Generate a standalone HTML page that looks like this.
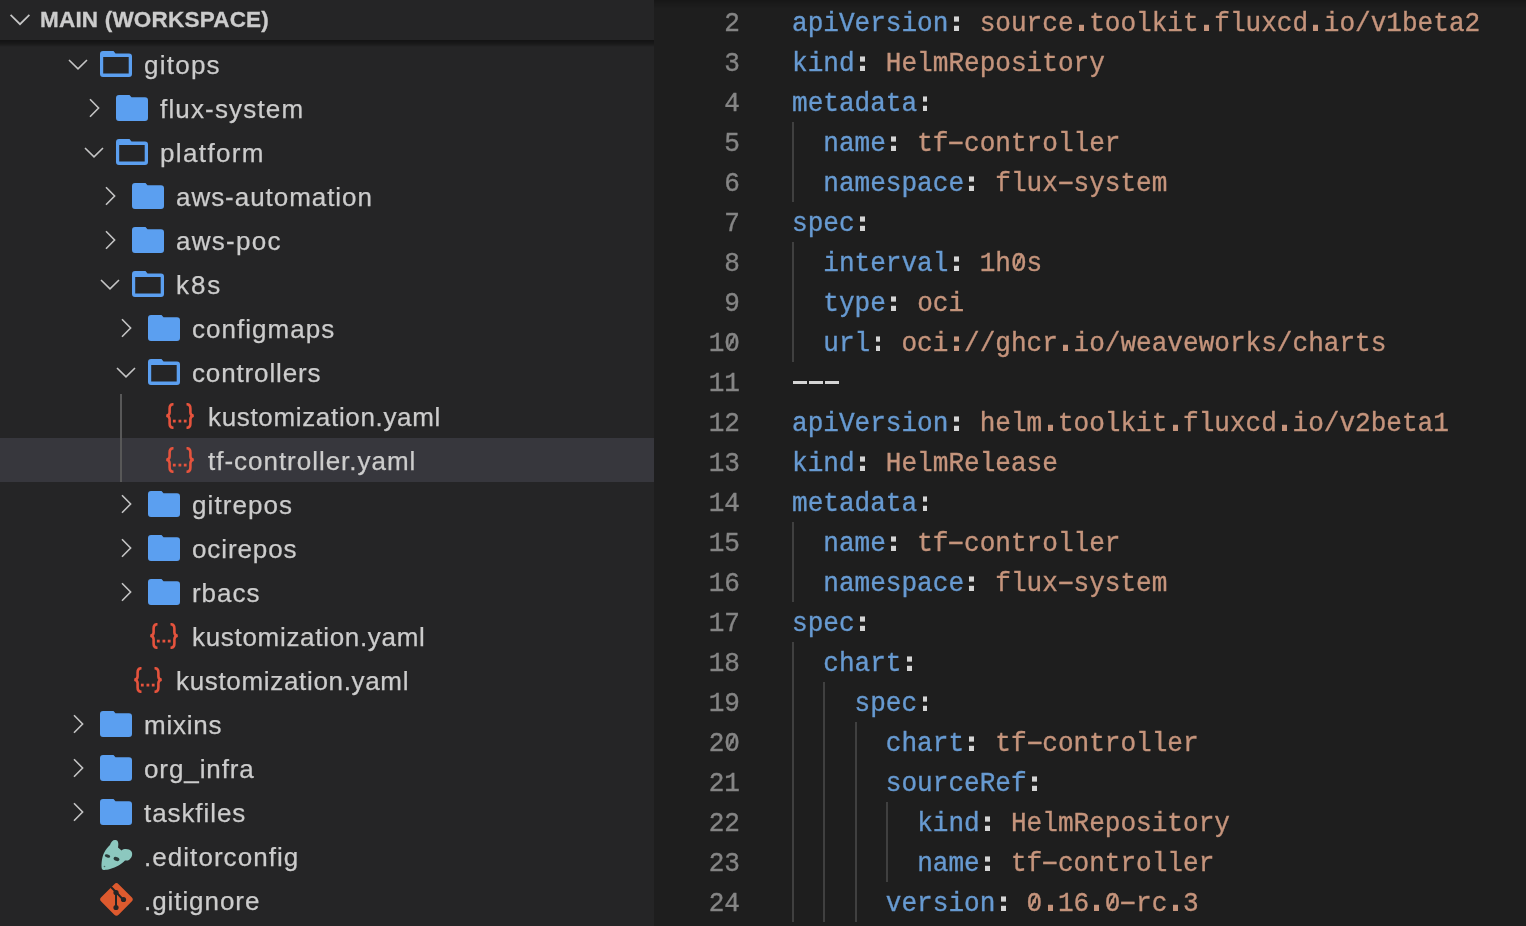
<!DOCTYPE html>
<html><head><meta charset="utf-8">
<style>
html,body{margin:0;padding:0;}
body{-webkit-font-smoothing:antialiased;width:1526px;height:926px;overflow:hidden;background:#1e1e1e;position:relative;font-family:"Liberation Sans",sans-serif;}
#sb{position:absolute;left:0;top:0;width:654px;height:926px;background:#252526;overflow:hidden;}
#hdr{position:absolute;left:0;top:0;width:654px;height:42px;background:#252526;z-index:3;}
#hdr .t{position:absolute;left:39.5px;top:6.5px;font-weight:bold;font-size:22.5px;color:#cccccc;letter-spacing:0.2px;line-height:26px;white-space:nowrap;will-change:transform;-webkit-text-stroke:0.3px #cccccc;}
#shadow{position:absolute;left:0;top:40px;width:654px;height:7px;background:linear-gradient(rgba(0,0,0,0.48),rgba(0,0,0,0.3) 55%,rgba(0,0,0,0.1) 85%,rgba(0,0,0,0));z-index:4;}
.row{position:absolute;left:0;width:654px;height:44px;}
.row.sel{background:#37373d;}
.ic{position:absolute;display:block;}
.lbl{position:absolute;top:1px;line-height:44px;font-size:26px;color:#cccccc;white-space:nowrap;letter-spacing:0px;will-change:transform;-webkit-text-stroke:0.25px #cccccc;}
#tg{position:absolute;left:120px;top:394px;width:2px;height:88px;background:#585858;}
#ed{position:absolute;left:654px;top:0;width:872px;height:926px;background:#1e1e1e;overflow:hidden;}
#edshadow{position:absolute;left:654px;top:0;width:872px;height:8px;background:linear-gradient(rgba(0,0,0,0.22),rgba(0,0,0,0));z-index:5;}
#sbedge{position:absolute;left:654px;top:0;width:0px;height:926px;display:none;z-index:5;}
.ln{position:absolute;left:654px;width:86px;text-align:right;height:40px;line-height:40px;font-family:"Liberation Mono",monospace;font-size:26.07px;color:#858585;will-change:transform;transform-origin:0 27px;transform:translateY(2px) scaleY(1.04);-webkit-text-stroke:0.35px currentColor;}
.cl{position:absolute;left:791.5px;height:40px;line-height:40px;font-family:"Liberation Mono",monospace;font-size:26.07px;white-space:pre;will-change:transform;transform-origin:0 27px;transform:translateY(2px) scaleY(1.04);-webkit-text-stroke:0.35px currentColor;}
.ig{position:absolute;width:2px;background:#404040;}
.hy{display:inline-block;transform:translateY(-1px) scaleX(1.8);}
.cn{display:inline-block;position:relative;color:transparent !important;-webkit-text-stroke:0 !important;}
.cn::before,.cn::after{content:"";position:absolute;left:5.4px;width:4.8px;height:5.2px;background:#d4d4d4;}
.cn.cv::before,.cn.cv::after{background:#c5947c;}
.cn::before{top:12.9px;}
.cn::after{top:21.9px;}
.pd{display:inline-block;position:relative;color:transparent !important;-webkit-text-stroke:0 !important;}
.pd::before{content:"";position:absolute;left:5.3px;width:5px;top:21.4px;height:5.6px;background:#c5947c;}
.z{position:relative;display:inline-block;}
.z::after{content:"";position:absolute;left:50%;top:50%;width:2.4px;height:13px;margin-left:-1.2px;margin-top:-9px;background:currentColor;transform:rotate(28deg);}
</style></head><body>
<div id="sb">
<div id="hdr"><svg class="ic" style="left:8px;top:8px" width="24" height="24" viewBox="0 0 24 24"><path d="M2.6 6.8 L12 16.2 L21.4 6.8" fill="none" stroke="#c5c5c5" stroke-width="1.7"/></svg><span class="t">MAIN (WORKSPACE)</span></div>
<div id="shadow"></div>
<div class="row" style="top:42px"><svg class="ic" style="left:66px;top:10.0px" width="24" height="24" viewBox="0 0 24 24"><path d="M3 8 L12 16.8 L21 8" fill="none" stroke="#c5c5c5" stroke-width="1.6"/></svg><svg class="ic" style="left:100px;top:9px" width="32" height="26" viewBox="0 0 32 26"><path d="M3 0 H13.5 L15.5 2.6 H29 A3 3 0 0 1 32 5.6 V23 A3 3 0 0 1 29 26 H3 A3 3 0 0 1 0 23 V3 A3 3 0 0 1 3 0 Z M3.2 6.1 V22.5 H28.7 V6.1 Z" fill="#5b9ff0" fill-rule="evenodd"/></svg><span class="lbl" style="left:144px;letter-spacing:1.24px">gitops</span></div><div class="row" style="top:86px"><svg class="ic" style="left:82px;top:10.0px" width="24" height="24" viewBox="0 0 24 24"><path d="M8 3.2 L16.6 12 L8 20.8" fill="none" stroke="#c5c5c5" stroke-width="1.6"/></svg><svg class="ic" style="left:116px;top:9px" width="32" height="26" viewBox="0 0 32 26"><path d="M3 0 H13.5 L15.5 2.3 H29 A3 3 0 0 1 32 5.3 V23 A3 3 0 0 1 29 26 H3 A3 3 0 0 1 0 23 V3 A3 3 0 0 1 3 0 Z" fill="#5b9ff0"/></svg><span class="lbl" style="left:160px;letter-spacing:1.16px">flux-system</span></div><div class="row" style="top:130px"><svg class="ic" style="left:82px;top:10.0px" width="24" height="24" viewBox="0 0 24 24"><path d="M3 8 L12 16.8 L21 8" fill="none" stroke="#c5c5c5" stroke-width="1.6"/></svg><svg class="ic" style="left:116px;top:9px" width="32" height="26" viewBox="0 0 32 26"><path d="M3 0 H13.5 L15.5 2.6 H29 A3 3 0 0 1 32 5.6 V23 A3 3 0 0 1 29 26 H3 A3 3 0 0 1 0 23 V3 A3 3 0 0 1 3 0 Z M3.2 6.1 V22.5 H28.7 V6.1 Z" fill="#5b9ff0" fill-rule="evenodd"/></svg><span class="lbl" style="left:160px;letter-spacing:1.373px">platform</span></div><div class="row" style="top:174px"><svg class="ic" style="left:98px;top:10.0px" width="24" height="24" viewBox="0 0 24 24"><path d="M8 3.2 L16.6 12 L8 20.8" fill="none" stroke="#c5c5c5" stroke-width="1.6"/></svg><svg class="ic" style="left:132px;top:9px" width="32" height="26" viewBox="0 0 32 26"><path d="M3 0 H13.5 L15.5 2.3 H29 A3 3 0 0 1 32 5.3 V23 A3 3 0 0 1 29 26 H3 A3 3 0 0 1 0 23 V3 A3 3 0 0 1 3 0 Z" fill="#5b9ff0"/></svg><span class="lbl" style="left:176px;letter-spacing:0.956px">aws-automation</span></div><div class="row" style="top:218px"><svg class="ic" style="left:98px;top:10.0px" width="24" height="24" viewBox="0 0 24 24"><path d="M8 3.2 L16.6 12 L8 20.8" fill="none" stroke="#c5c5c5" stroke-width="1.6"/></svg><svg class="ic" style="left:132px;top:9px" width="32" height="26" viewBox="0 0 32 26"><path d="M3 0 H13.5 L15.5 2.3 H29 A3 3 0 0 1 32 5.3 V23 A3 3 0 0 1 29 26 H3 A3 3 0 0 1 0 23 V3 A3 3 0 0 1 3 0 Z" fill="#5b9ff0"/></svg><span class="lbl" style="left:176px;letter-spacing:1.267px">aws-poc</span></div><div class="row" style="top:262px"><svg class="ic" style="left:98px;top:10.0px" width="24" height="24" viewBox="0 0 24 24"><path d="M3 8 L12 16.8 L21 8" fill="none" stroke="#c5c5c5" stroke-width="1.6"/></svg><svg class="ic" style="left:132px;top:9px" width="32" height="26" viewBox="0 0 32 26"><path d="M3 0 H13.5 L15.5 2.6 H29 A3 3 0 0 1 32 5.6 V23 A3 3 0 0 1 29 26 H3 A3 3 0 0 1 0 23 V3 A3 3 0 0 1 3 0 Z M3.2 6.1 V22.5 H28.7 V6.1 Z" fill="#5b9ff0" fill-rule="evenodd"/></svg><span class="lbl" style="left:176px;letter-spacing:1.9px">k8s</span></div><div class="row" style="top:306px"><svg class="ic" style="left:114px;top:10.0px" width="24" height="24" viewBox="0 0 24 24"><path d="M8 3.2 L16.6 12 L8 20.8" fill="none" stroke="#c5c5c5" stroke-width="1.6"/></svg><svg class="ic" style="left:148px;top:9px" width="32" height="26" viewBox="0 0 32 26"><path d="M3 0 H13.5 L15.5 2.3 H29 A3 3 0 0 1 32 5.3 V23 A3 3 0 0 1 29 26 H3 A3 3 0 0 1 0 23 V3 A3 3 0 0 1 3 0 Z" fill="#5b9ff0"/></svg><span class="lbl" style="left:192px;letter-spacing:1.021px">configmaps</span></div><div class="row" style="top:350px"><svg class="ic" style="left:114px;top:10.0px" width="24" height="24" viewBox="0 0 24 24"><path d="M3 8 L12 16.8 L21 8" fill="none" stroke="#c5c5c5" stroke-width="1.6"/></svg><svg class="ic" style="left:148px;top:9px" width="32" height="26" viewBox="0 0 32 26"><path d="M3 0 H13.5 L15.5 2.6 H29 A3 3 0 0 1 32 5.6 V23 A3 3 0 0 1 29 26 H3 A3 3 0 0 1 0 23 V3 A3 3 0 0 1 3 0 Z M3.2 6.1 V22.5 H28.7 V6.1 Z" fill="#5b9ff0" fill-rule="evenodd"/></svg><span class="lbl" style="left:192px;letter-spacing:0.86px">controllers</span></div><div class="row" style="top:394px"><svg class="ic" style="left:165px;top:9px" width="30" height="26" viewBox="0 0 30 26"><path d="M8.5 1.2 C5.5 1.2 4.6 2.6 4.6 5.5 V9.5 C4.6 11.5 3.6 12.5 1.4 12.8 C3.6 13.2 4.6 14.2 4.6 16.2 V20.5 C4.6 23.4 5.5 24.8 8.5 24.8" fill="none" stroke="#e5533d" stroke-width="2.6"/><path d="M21.5 1.2 C24.5 1.2 25.4 2.6 25.4 5.5 V9.5 C25.4 11.5 26.4 12.5 28.6 12.8 C26.4 13.2 25.4 14.2 25.4 16.2 V20.5 C25.4 23.4 24.5 24.8 21.5 24.8" fill="none" stroke="#e5533d" stroke-width="2.6"/><rect x="7.9" y="16.7" width="2.8" height="2.8" fill="#e5533d"/><rect x="13.5" y="16.7" width="2.8" height="2.8" fill="#e5533d"/><rect x="18.8" y="16.7" width="2.8" height="2.8" fill="#e5533d"/></svg><span class="lbl" style="left:208px;letter-spacing:0.662px">kustomization.yaml</span></div><div class="row sel" style="top:438px"><svg class="ic" style="left:165px;top:9px" width="30" height="26" viewBox="0 0 30 26"><path d="M8.5 1.2 C5.5 1.2 4.6 2.6 4.6 5.5 V9.5 C4.6 11.5 3.6 12.5 1.4 12.8 C3.6 13.2 4.6 14.2 4.6 16.2 V20.5 C4.6 23.4 5.5 24.8 8.5 24.8" fill="none" stroke="#e5533d" stroke-width="2.6"/><path d="M21.5 1.2 C24.5 1.2 25.4 2.6 25.4 5.5 V9.5 C25.4 11.5 26.4 12.5 28.6 12.8 C26.4 13.2 25.4 14.2 25.4 16.2 V20.5 C25.4 23.4 24.5 24.8 21.5 24.8" fill="none" stroke="#e5533d" stroke-width="2.6"/><rect x="7.9" y="16.7" width="2.8" height="2.8" fill="#e5533d"/><rect x="13.5" y="16.7" width="2.8" height="2.8" fill="#e5533d"/><rect x="18.8" y="16.7" width="2.8" height="2.8" fill="#e5533d"/></svg><span class="lbl" style="left:208px;letter-spacing:0.975px">tf-controller.yaml</span></div><div class="row" style="top:482px"><svg class="ic" style="left:114px;top:10.0px" width="24" height="24" viewBox="0 0 24 24"><path d="M8 3.2 L16.6 12 L8 20.8" fill="none" stroke="#c5c5c5" stroke-width="1.6"/></svg><svg class="ic" style="left:148px;top:9px" width="32" height="26" viewBox="0 0 32 26"><path d="M3 0 H13.5 L15.5 2.3 H29 A3 3 0 0 1 32 5.3 V23 A3 3 0 0 1 29 26 H3 A3 3 0 0 1 0 23 V3 A3 3 0 0 1 3 0 Z" fill="#5b9ff0"/></svg><span class="lbl" style="left:192px;letter-spacing:1.083px">gitrepos</span></div><div class="row" style="top:526px"><svg class="ic" style="left:114px;top:10.0px" width="24" height="24" viewBox="0 0 24 24"><path d="M8 3.2 L16.6 12 L8 20.8" fill="none" stroke="#c5c5c5" stroke-width="1.6"/></svg><svg class="ic" style="left:148px;top:9px" width="32" height="26" viewBox="0 0 32 26"><path d="M3 0 H13.5 L15.5 2.3 H29 A3 3 0 0 1 32 5.3 V23 A3 3 0 0 1 29 26 H3 A3 3 0 0 1 0 23 V3 A3 3 0 0 1 3 0 Z" fill="#5b9ff0"/></svg><span class="lbl" style="left:192px;letter-spacing:0.886px">ocirepos</span></div><div class="row" style="top:570px"><svg class="ic" style="left:114px;top:10.0px" width="24" height="24" viewBox="0 0 24 24"><path d="M8 3.2 L16.6 12 L8 20.8" fill="none" stroke="#c5c5c5" stroke-width="1.6"/></svg><svg class="ic" style="left:148px;top:9px" width="32" height="26" viewBox="0 0 32 26"><path d="M3 0 H13.5 L15.5 2.3 H29 A3 3 0 0 1 32 5.3 V23 A3 3 0 0 1 29 26 H3 A3 3 0 0 1 0 23 V3 A3 3 0 0 1 3 0 Z" fill="#5b9ff0"/></svg><span class="lbl" style="left:192px;letter-spacing:0.95px">rbacs</span></div><div class="row" style="top:614px"><svg class="ic" style="left:149px;top:9px" width="30" height="26" viewBox="0 0 30 26"><path d="M8.5 1.2 C5.5 1.2 4.6 2.6 4.6 5.5 V9.5 C4.6 11.5 3.6 12.5 1.4 12.8 C3.6 13.2 4.6 14.2 4.6 16.2 V20.5 C4.6 23.4 5.5 24.8 8.5 24.8" fill="none" stroke="#e5533d" stroke-width="2.6"/><path d="M21.5 1.2 C24.5 1.2 25.4 2.6 25.4 5.5 V9.5 C25.4 11.5 26.4 12.5 28.6 12.8 C26.4 13.2 25.4 14.2 25.4 16.2 V20.5 C25.4 23.4 24.5 24.8 21.5 24.8" fill="none" stroke="#e5533d" stroke-width="2.6"/><rect x="7.9" y="16.7" width="2.8" height="2.8" fill="#e5533d"/><rect x="13.5" y="16.7" width="2.8" height="2.8" fill="#e5533d"/><rect x="18.8" y="16.7" width="2.8" height="2.8" fill="#e5533d"/></svg><span class="lbl" style="left:192px;letter-spacing:0.69px">kustomization.yaml</span></div><div class="row" style="top:658px"><svg class="ic" style="left:133px;top:9px" width="30" height="26" viewBox="0 0 30 26"><path d="M8.5 1.2 C5.5 1.2 4.6 2.6 4.6 5.5 V9.5 C4.6 11.5 3.6 12.5 1.4 12.8 C3.6 13.2 4.6 14.2 4.6 16.2 V20.5 C4.6 23.4 5.5 24.8 8.5 24.8" fill="none" stroke="#e5533d" stroke-width="2.6"/><path d="M21.5 1.2 C24.5 1.2 25.4 2.6 25.4 5.5 V9.5 C25.4 11.5 26.4 12.5 28.6 12.8 C26.4 13.2 25.4 14.2 25.4 16.2 V20.5 C25.4 23.4 24.5 24.8 21.5 24.8" fill="none" stroke="#e5533d" stroke-width="2.6"/><rect x="7.9" y="16.7" width="2.8" height="2.8" fill="#e5533d"/><rect x="13.5" y="16.7" width="2.8" height="2.8" fill="#e5533d"/><rect x="18.8" y="16.7" width="2.8" height="2.8" fill="#e5533d"/></svg><span class="lbl" style="left:176px;letter-spacing:0.669px">kustomization.yaml</span></div><div class="row" style="top:702px"><svg class="ic" style="left:66px;top:10.0px" width="24" height="24" viewBox="0 0 24 24"><path d="M8 3.2 L16.6 12 L8 20.8" fill="none" stroke="#c5c5c5" stroke-width="1.6"/></svg><svg class="ic" style="left:100px;top:9px" width="32" height="26" viewBox="0 0 32 26"><path d="M3 0 H13.5 L15.5 2.3 H29 A3 3 0 0 1 32 5.3 V23 A3 3 0 0 1 29 26 H3 A3 3 0 0 1 0 23 V3 A3 3 0 0 1 3 0 Z" fill="#5b9ff0"/></svg><span class="lbl" style="left:144px;letter-spacing:0.76px">mixins</span></div><div class="row" style="top:746px"><svg class="ic" style="left:66px;top:10.0px" width="24" height="24" viewBox="0 0 24 24"><path d="M8 3.2 L16.6 12 L8 20.8" fill="none" stroke="#c5c5c5" stroke-width="1.6"/></svg><svg class="ic" style="left:100px;top:9px" width="32" height="26" viewBox="0 0 32 26"><path d="M3 0 H13.5 L15.5 2.3 H29 A3 3 0 0 1 32 5.3 V23 A3 3 0 0 1 29 26 H3 A3 3 0 0 1 0 23 V3 A3 3 0 0 1 3 0 Z" fill="#5b9ff0"/></svg><span class="lbl" style="left:144px;letter-spacing:0.9px">org_infra</span></div><div class="row" style="top:790px"><svg class="ic" style="left:66px;top:10.0px" width="24" height="24" viewBox="0 0 24 24"><path d="M8 3.2 L16.6 12 L8 20.8" fill="none" stroke="#c5c5c5" stroke-width="1.6"/></svg><svg class="ic" style="left:100px;top:9px" width="32" height="26" viewBox="0 0 32 26"><path d="M3 0 H13.5 L15.5 2.3 H29 A3 3 0 0 1 32 5.3 V23 A3 3 0 0 1 29 26 H3 A3 3 0 0 1 0 23 V3 A3 3 0 0 1 3 0 Z" fill="#5b9ff0"/></svg><span class="lbl" style="left:144px;letter-spacing:0.92px">taskfiles</span></div><div class="row" style="top:834px"><svg class="ic" style="left:98px;top:2px" width="38" height="38" viewBox="0 0 38 38"><path d="M17 4 C20 3.5 21 7 20 11.5 L23.5 14.5 C26 12.5 31 12.5 33.5 15.5 C35 18 34 22.5 30 24.5 L27 24.5 C24 28 18 31.5 12 33 C8 34 5 34.5 4 33 C3 31 3.5 22 6 17 C8 13 10 11 12 9 C13 6 14.5 4 17 4 Z" fill="#8cc8bf"/><ellipse cx="9.5" cy="20" rx="2.8" ry="1.5" transform="rotate(15 9.5 20)" fill="#2a3b39"/><ellipse cx="18.5" cy="23" rx="3" ry="1.9" transform="rotate(20 18.5 23)" fill="#2a3b39"/><circle cx="6.5" cy="30.5" r="0.8" fill="#4a6b66"/></svg><span class="lbl" style="left:144px;letter-spacing:1.048px">.editorconfig</span></div><div class="row" style="top:878px"><svg class="ic" style="left:100px;top:5px" width="33" height="33" viewBox="0 0 33 33"><path d="M14.3 1.2 L1.2 14.3 A3 3 0 0 0 1.2 18.6 L14.3 31.7 A3 3 0 0 0 18.6 31.7 L31.7 18.6 A3 3 0 0 0 31.7 14.3 L18.6 1.2 A3 3 0 0 0 14.3 1.2 Z" fill="#dd5a2e"/><path d="M11 4 L16 9 L23 16.5 M16 9 V25" fill="none" stroke="#252526" stroke-width="2"/><circle cx="16" cy="9.5" r="2.6" fill="#252526"/><circle cx="23.5" cy="16.5" r="2.6" fill="#252526"/><circle cx="16" cy="24.5" r="2.6" fill="#252526"/></svg><span class="lbl" style="left:144px;letter-spacing:0.932px">.gitignore</span></div>
<div id="tg"></div>
</div>
<div id="edshadow"></div>
<div id="sbedge"></div>
<div class="ln" style="top:2px">2</div><div class="cl" style="top:2px"><span style="color:#679ad1">apiVersion</span><span class="cn" style="color:#d4d4d4">:</span> <span style="color:#c5947c">source<span class="pd">.</span>toolkit<span class="pd">.</span>fluxcd<span class="pd">.</span>io/v1beta2</span></div><div class="ln" style="top:42px">3</div><div class="cl" style="top:42px"><span style="color:#679ad1">kind</span><span class="cn" style="color:#d4d4d4">:</span> <span style="color:#c5947c">HelmRepository</span></div><div class="ln" style="top:82px">4</div><div class="cl" style="top:82px"><span style="color:#679ad1">metadata</span><span class="cn" style="color:#d4d4d4">:</span></div><div class="ln" style="top:122px">5</div><div class="cl" style="top:122px">&nbsp;&nbsp;<span style="color:#679ad1">name</span><span class="cn" style="color:#d4d4d4">:</span> <span style="color:#c5947c">tf<span class="hy">-</span>controller</span></div><div class="ln" style="top:162px">6</div><div class="cl" style="top:162px">&nbsp;&nbsp;<span style="color:#679ad1">namespace</span><span class="cn" style="color:#d4d4d4">:</span> <span style="color:#c5947c">flux<span class="hy">-</span>system</span></div><div class="ln" style="top:202px">7</div><div class="cl" style="top:202px"><span style="color:#679ad1">spec</span><span class="cn" style="color:#d4d4d4">:</span></div><div class="ln" style="top:242px">8</div><div class="cl" style="top:242px">&nbsp;&nbsp;<span style="color:#679ad1">interval</span><span class="cn" style="color:#d4d4d4">:</span> <span style="color:#c5947c">1h<span class="z">0</span>s</span></div><div class="ln" style="top:282px">9</div><div class="cl" style="top:282px">&nbsp;&nbsp;<span style="color:#679ad1">type</span><span class="cn" style="color:#d4d4d4">:</span> <span style="color:#c5947c">oci</span></div><div class="ln" style="top:322px">1<span class="z">0</span></div><div class="cl" style="top:322px">&nbsp;&nbsp;<span style="color:#679ad1">url</span><span class="cn" style="color:#d4d4d4">:</span> <span style="color:#c5947c">oci<span class="cn cv">:</span>//ghcr<span class="pd">.</span>io/weaveworks/charts</span></div><div class="ln" style="top:362px">11</div><div style="position:absolute;left:793px;top:381px;width:14px;height:3px;background:#d4d4d4"></div><div style="position:absolute;left:809px;top:381px;width:14px;height:3px;background:#d4d4d4"></div><div style="position:absolute;left:824.5px;top:381px;width:14px;height:3px;background:#d4d4d4"></div><div class="cl" style="top:362px"></div><div class="ln" style="top:402px">12</div><div class="cl" style="top:402px"><span style="color:#679ad1">apiVersion</span><span class="cn" style="color:#d4d4d4">:</span> <span style="color:#c5947c">helm<span class="pd">.</span>toolkit<span class="pd">.</span>fluxcd<span class="pd">.</span>io/v2beta1</span></div><div class="ln" style="top:442px">13</div><div class="cl" style="top:442px"><span style="color:#679ad1">kind</span><span class="cn" style="color:#d4d4d4">:</span> <span style="color:#c5947c">HelmRelease</span></div><div class="ln" style="top:482px">14</div><div class="cl" style="top:482px"><span style="color:#679ad1">metadata</span><span class="cn" style="color:#d4d4d4">:</span></div><div class="ln" style="top:522px">15</div><div class="cl" style="top:522px">&nbsp;&nbsp;<span style="color:#679ad1">name</span><span class="cn" style="color:#d4d4d4">:</span> <span style="color:#c5947c">tf<span class="hy">-</span>controller</span></div><div class="ln" style="top:562px">16</div><div class="cl" style="top:562px">&nbsp;&nbsp;<span style="color:#679ad1">namespace</span><span class="cn" style="color:#d4d4d4">:</span> <span style="color:#c5947c">flux<span class="hy">-</span>system</span></div><div class="ln" style="top:602px">17</div><div class="cl" style="top:602px"><span style="color:#679ad1">spec</span><span class="cn" style="color:#d4d4d4">:</span></div><div class="ln" style="top:642px">18</div><div class="cl" style="top:642px">&nbsp;&nbsp;<span style="color:#679ad1">chart</span><span class="cn" style="color:#d4d4d4">:</span></div><div class="ln" style="top:682px">19</div><div class="cl" style="top:682px">&nbsp;&nbsp;&nbsp;&nbsp;<span style="color:#679ad1">spec</span><span class="cn" style="color:#d4d4d4">:</span></div><div class="ln" style="top:722px">2<span class="z">0</span></div><div class="cl" style="top:722px">&nbsp;&nbsp;&nbsp;&nbsp;&nbsp;&nbsp;<span style="color:#679ad1">chart</span><span class="cn" style="color:#d4d4d4">:</span> <span style="color:#c5947c">tf<span class="hy">-</span>controller</span></div><div class="ln" style="top:762px">21</div><div class="cl" style="top:762px">&nbsp;&nbsp;&nbsp;&nbsp;&nbsp;&nbsp;<span style="color:#679ad1">sourceRef</span><span class="cn" style="color:#d4d4d4">:</span></div><div class="ln" style="top:802px">22</div><div class="cl" style="top:802px">&nbsp;&nbsp;&nbsp;&nbsp;&nbsp;&nbsp;&nbsp;&nbsp;<span style="color:#679ad1">kind</span><span class="cn" style="color:#d4d4d4">:</span> <span style="color:#c5947c">HelmRepository</span></div><div class="ln" style="top:842px">23</div><div class="cl" style="top:842px">&nbsp;&nbsp;&nbsp;&nbsp;&nbsp;&nbsp;&nbsp;&nbsp;<span style="color:#679ad1">name</span><span class="cn" style="color:#d4d4d4">:</span> <span style="color:#c5947c">tf<span class="hy">-</span>controller</span></div><div class="ln" style="top:882px">24</div><div class="cl" style="top:882px">&nbsp;&nbsp;&nbsp;&nbsp;&nbsp;&nbsp;<span style="color:#679ad1">version</span><span class="cn" style="color:#d4d4d4">:</span> <span style="color:#c5947c"><span class="z">0</span><span class="pd">.</span>16<span class="pd">.</span><span class="z">0</span><span class="hy">-</span>rc<span class="pd">.</span>3</span></div><div class="ig" style="left:792.0px;top:122px;height:80px"></div><div class="ig" style="left:792.0px;top:242px;height:120px"></div><div class="ig" style="left:792.0px;top:522px;height:80px"></div><div class="ig" style="left:792.0px;top:642px;height:280px"></div><div class="ig" style="left:823.0px;top:682px;height:240px"></div><div class="ig" style="left:855.0px;top:722px;height:200px"></div><div class="ig" style="left:886.0px;top:802px;height:80px"></div>
</body></html>
